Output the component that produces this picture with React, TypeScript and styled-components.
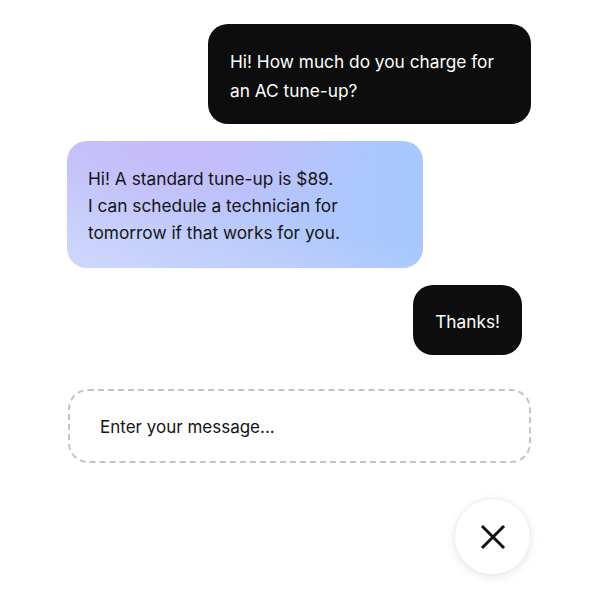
import React from "react";
import styled, { createGlobalStyle } from "styled-components";

const GlobalStyle = createGlobalStyle`
	html, body {
		margin: 0;
		padding: 0;
		background: #ffffff;
	}
	body {
		font-family: Inter, "Noto Sans", "Liberation Sans", sans-serif;
		-webkit-font-smoothing: antialiased;
	}
`;

type Message = {
	id: number;
	from: "user" | "bot";
	text: string[];
	width?: number;
	inset?: number;
	pad: string;
	lineHeight: number;
};

const MESSAGES: Message[] = [
	{
		id: 1,
		from: "user",
		text: ["Hi! How much do you charge for", "an AC tune-up?"],
		width: 323,
		pad: "23px 22px 19px",
		lineHeight: 29,
	},
	{
		id: 2,
		from: "bot",
		text: ["Hi! A standard tune-up is $89.", "I can schedule a technician for", "tomorrow if that works for you."],
		width: 356,
		pad: "24px 21px 22px",
		lineHeight: 27,
	},
	{ id: 3, from: "user", text: ["Thanks!"], inset: 9, pad: "23px 22px 20px", lineHeight: 27 },
];

export default function App() {
	return (
		<>
			<GlobalStyle />
			<Page>
				<Thread>
					{MESSAGES.map((m) => (
						<Bubble
							key={m.id}
							$from={m.from}
							$width={m.width}
							$inset={m.inset}
							$pad={m.pad}
							$lh={m.lineHeight}
						>
							{m.text.map((line, i) => (
								<Line key={i}>{line}</Line>
							))}
						</Bubble>
					))}
				</Thread>
				<Composer>
					<ComposerText>Enter your message...</ComposerText>
				</Composer>
				<Footer>
					<CloseButton aria-label="Close chat">
						<svg width="26" height="26" viewBox="0 0 26 26" fill="none">
							<path d="M2 2 L24 24 M24 2 L2 24" stroke="#111" strokeWidth="3" />
						</svg>
					</CloseButton>
				</Footer>
			</Page>
		</>
	);
}

const Page = styled.div`
	width: 600px;
	height: 600px;
	box-sizing: border-box;
	padding: 24px 69px 0 67px;
	display: flex;
	flex-direction: column;
`;

const Thread = styled.div`
	display: flex;
	flex-direction: column;
	gap: 17px;
`;

const Bubble = styled.div<{
	$from: "user" | "bot";
	$width?: number;
	$inset?: number;
	$pad: string;
	$lh: number;
}>`
	box-sizing: border-box;
	width: ${({ $width }) => ($width ? `${$width}px` : "fit-content")};
	align-self: ${({ $from }) => ($from === "user" ? "flex-end" : "flex-start")};
	margin-right: ${({ $inset }) => $inset ?? 0}px;
	padding: ${({ $pad }) => $pad};
	border-radius: 20px;
	font-size: 17.3px;
	line-height: ${({ $lh }) => $lh}px;
	color: ${({ $from }) => ($from === "user" ? "#ffffff" : "#141414")};
	background: ${({ $from }) =>
		$from === "user"
			? "#0d0d0d"
			: `radial-gradient(ellipse 55% 75% at 32% 0%, rgba(203, 185, 250, 0.9), rgba(203, 185, 250, 0) 100%),
			   linear-gradient(to top right, rgba(210, 220, 252, 0.8), rgba(210, 220, 252, 0) 55%),
			   linear-gradient(to right, #bec4f9, #a8c8fd)`};
`;

const Line = styled.div`
	white-space: nowrap;
`;

const Composer = styled.div`
	margin-top: 34px;
	margin-left: 1px;
	height: 74px;
	flex-shrink: 0;
	box-sizing: border-box;
	border: 2px dashed #c4c4c4;
	border-radius: 20px;
	display: flex;
	align-items: center;
	padding: 2px 29px 0 30px;
`;

const ComposerText = styled.span`
	font-size: 17px;
	color: #141414;
`;

const Footer = styled.div`
	margin-top: 35px;
	display: flex;
	justify-content: flex-end;
`;

const CloseButton = styled.button`
	width: 77px;
	height: 77px;
	flex-shrink: 0;
	border-radius: 50%;
	border: 1px solid #efefef;
	background: #ffffff;
	box-shadow: 0 2px 8px rgba(0, 0, 0, 0.1);
	display: flex;
	align-items: center;
	justify-content: center;
	padding: 0;
	cursor: pointer;
`;
